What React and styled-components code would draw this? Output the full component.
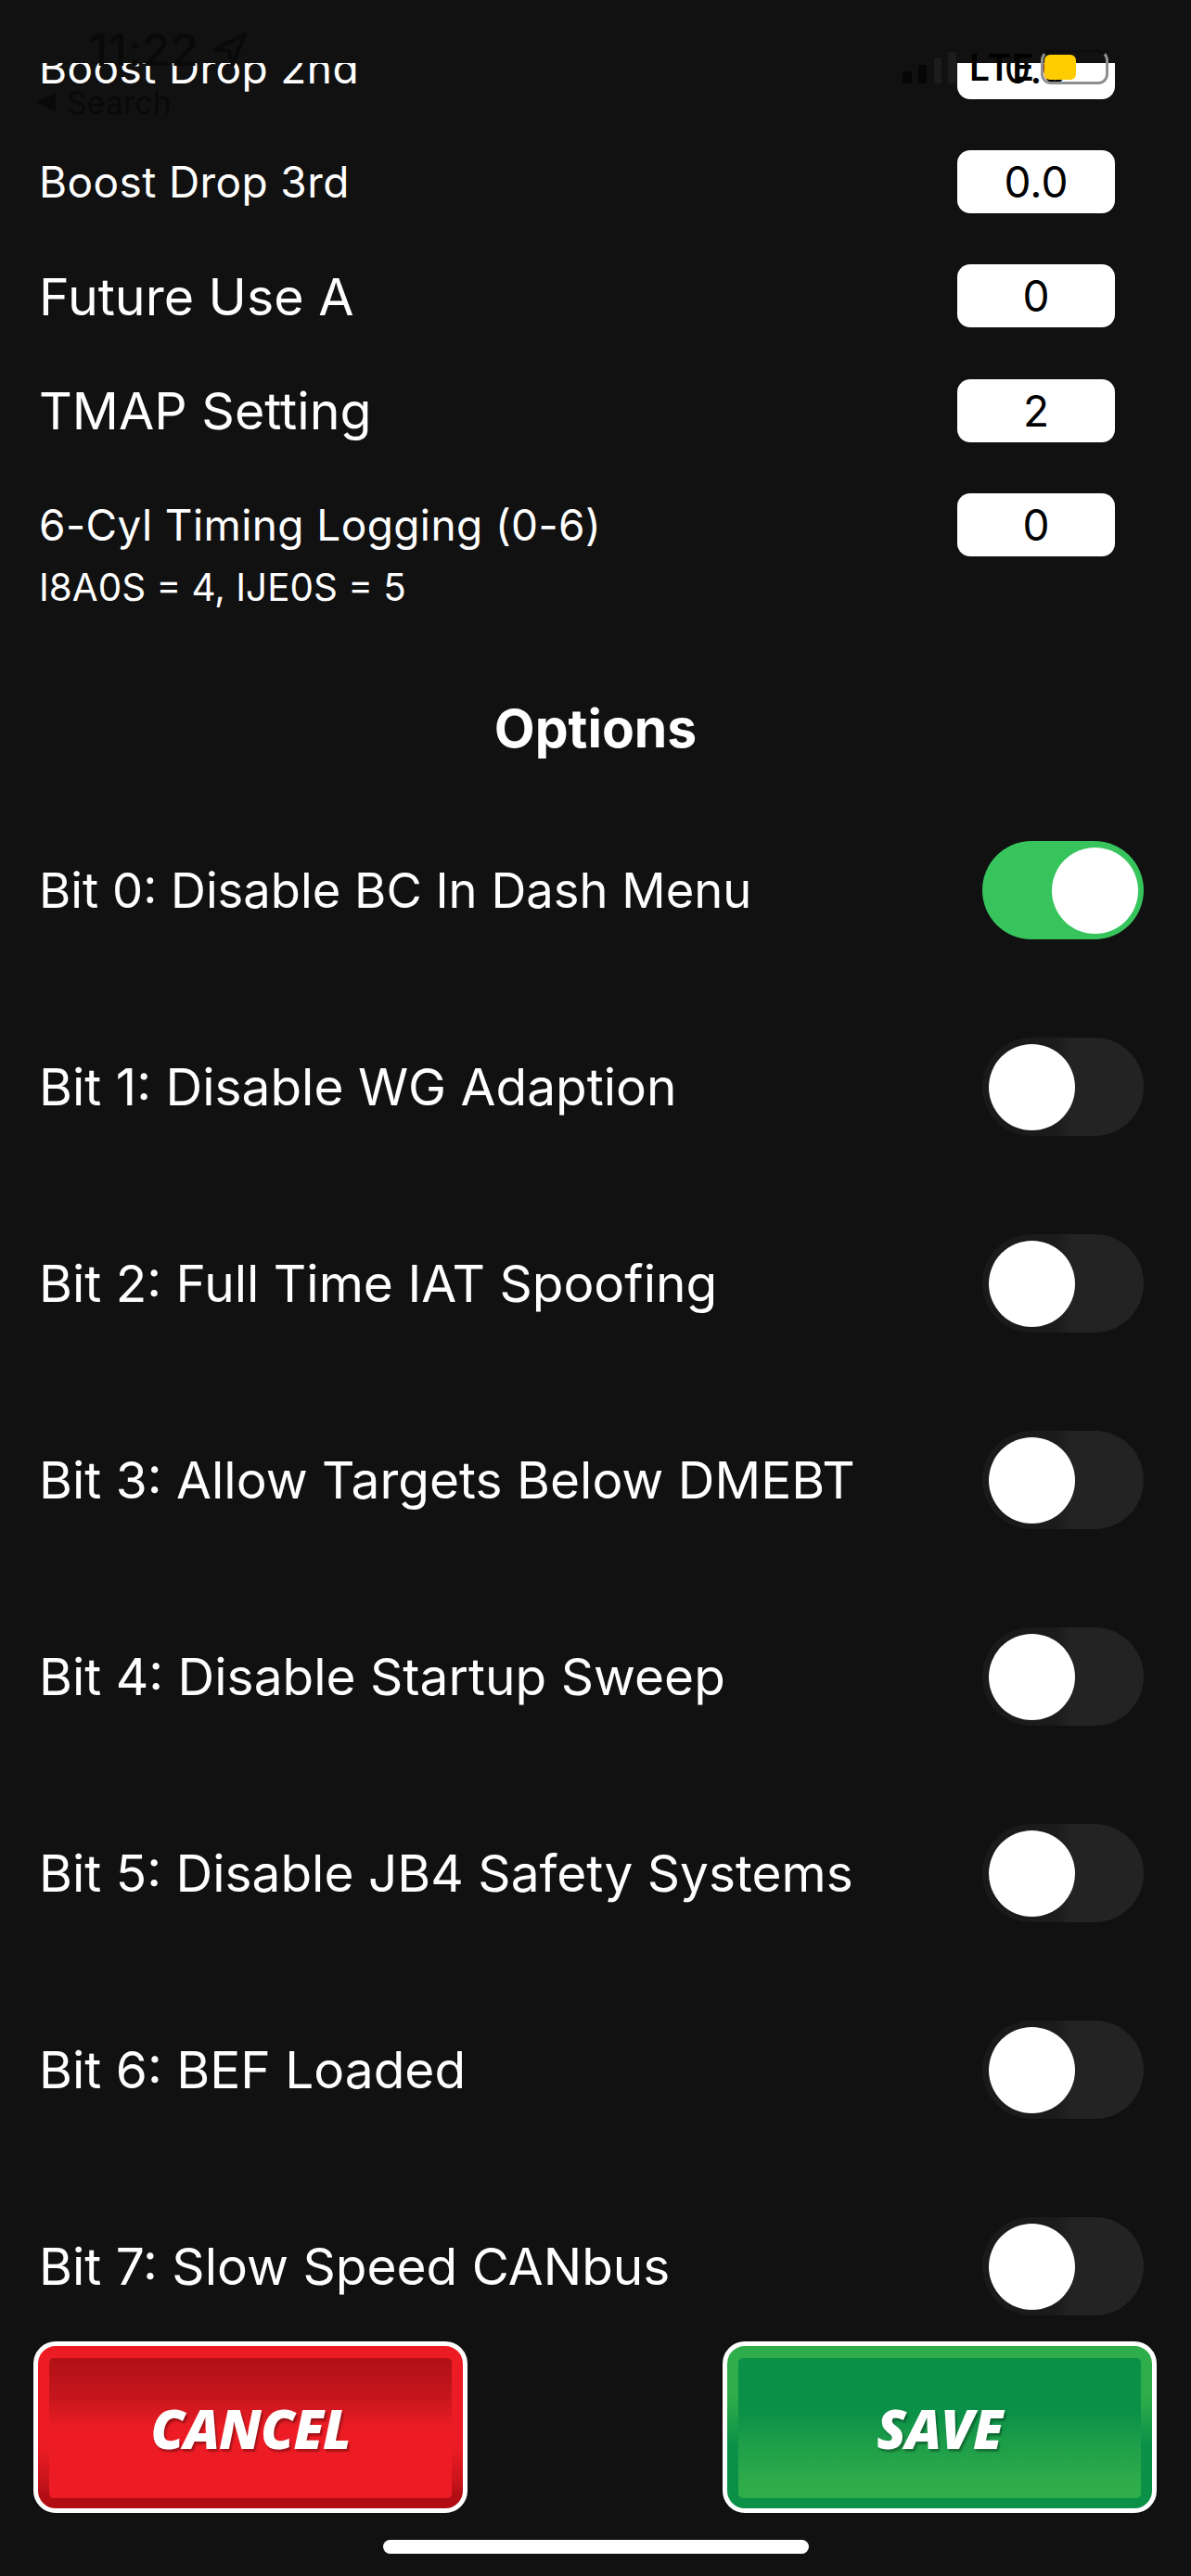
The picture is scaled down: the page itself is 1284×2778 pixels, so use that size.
import React from "react";
import styled, { createGlobalStyle } from "styled-components";

const Global = createGlobalStyle`
  html, body { margin: 0; padding: 0; background: #111111; }
  * { box-sizing: border-box; }
`;

const Page = styled.div`
  position: relative;
  width: 1284px;
  height: 2778px;
  overflow: hidden;
  background: #111111;
  color: #ffffff;
  font-family: Inter, "Liberation Sans", sans-serif;
  display: flex;
  flex-direction: column;
  padding-top: 68px;
`;

const Scroller = styled.main`
  height: 2429px;
  overflow: hidden;
  flex: none;
`;

const Content = styled.div`
  margin-top: -57px;
  display: flex;
  flex-direction: column;
`;

const FieldRow = styled.div`
  height: 123.3px;
  padding: 0 82px 0 42px;
  display: flex;
  align-items: center;
  justify-content: space-between;
`;

const FieldLabel = styled.span`
  font-size: ${(p) => p.$size}px;
  font-weight: 400;
  letter-spacing: ${(p) => p.$track || 0}px;
`;

const ValueBox = styled.div`
  width: 170px;
  height: 68px;
  border-radius: 14px;
  background: #ffffff;
  color: #000000;
  font-size: 46px;
  display: flex;
  align-items: center;
  justify-content: center;
`;

const Note = styled.div`
  margin: -18px 0 0 42px;
  height: 50px;
  font-size: 40.4px;
  line-height: 50px;
`;

const Heading = styled.h2`
  margin: 97px 0 0;
  height: 60px;
  font-size: 57px;
  line-height: 60px;
  font-weight: 700;
  text-align: center;
`;

const OptionList = styled.div`
  margin-top: 91px;
  display: flex;
  flex-direction: column;
  gap: 106px;
`;

const OptionRow = styled.div`
  height: 106px;
  padding: 0 51px 0 42px;
  display: flex;
  align-items: center;
  justify-content: space-between;
`;

const OptionLabel = styled.span`
  font-size: ${(p) => p.$size}px;
  font-weight: 400;
`;

const Track = styled.div`
  position: relative;
  width: 174px;
  height: 106px;
  border-radius: 53px;
  background: ${(p) =>
    p.$on ? "#37c45d" : "linear-gradient(90deg, #1a1a1a 0%, #1b1b1b 45%, #232323 55%, #232323 100%)"};
`;

const Thumb = styled.div`
  position: absolute;
  top: 6.5px;
  left: ${(p) => (p.$on ? "75px" : "7px")};
  width: 93px;
  height: 93px;
  border-radius: 50%;
  background: #ffffff;
`;

const Footer = styled.footer`
  margin-top: 28px;
  padding: 0 37px 0 36px;
  display: flex;
  justify-content: space-between;
  flex: none;
`;

const ActionButton = styled.button`
  width: 468px;
  height: 185px;
  padding: 13px 12px 11px;
  border: 5px solid #ffffff;
  border-radius: 24px;
  display: flex;
  background: ${(p) => p.$frame};
  font: inherit;
`;

const ButtonFace = styled.span`
  flex: 1;
  border-radius: 5px;
  background: ${(p) => p.$face};
  display: flex;
  align-items: center;
  justify-content: center;
  color: #ffffff;
  font-family: "Open Sans", "Liberation Sans", sans-serif;
  font-size: 58px;
  font-weight: 800;
  font-style: italic;
  letter-spacing: -1px;
  text-shadow: 2px 3px 2px rgba(0, 0, 0, 0.3);
`;

const HomeBar = styled.div`
  width: 459px;
  height: 15px;
  margin: 29px auto 0;
  border-radius: 8px;
  background: #ffffff;
  flex: none;
`;

/* Ghost status bar that lies over the content */
const StatusLeft = styled.div`
  position: absolute;
  left: 39px;
  top: 25px;
  color: #090909;
  display: flex;
  flex-direction: column;
  gap: 8px;
`;

const TimeLine = styled.div`
  margin-left: 57px;
  display: flex;
  align-items: center;
  gap: 14px;
  font-size: 48px;
  font-weight: 500;
  letter-spacing: 1px;
  height: 56px;
`;

const BackLine = styled.div`
  display: flex;
  align-items: center;
  gap: 12px;
  font-size: 34px;
  height: 42px;
`;

const StatusRight = styled.div`
  position: absolute;
  left: 973px;
  top: 54px;
  height: 37px;
  display: flex;
  align-items: center;
`;

const Signal = styled.svg`
  width: 60px;
  height: 37px;
  margin-right: 12px;
`;

const Lte = styled.span`
  width: 77px;
  color: #000;
  font-size: 39px;
  font-weight: 600;
  letter-spacing: 1px;
`;

const Battery = styled.div`
  position: relative;
  width: 73px;
  height: 37px;
  border: 3px solid #8f8f8f;
  border-top-color: #0c0c0c;
  border-radius: 11px;
`;

const BatteryDot = styled.div`
  position: absolute;
  left: 1px;
  top: 2px;
  width: 34px;
  height: 27px;
  border-radius: 6px;
  background: #ffcc00;
`;

const fields = [
  { label: "Boost Drop 2nd", value: "0.0", size: 46, track: 0.4 },
  { label: "Boost Drop 3rd", value: "0.0", size: 46, track: 0.4 },
  { label: "Future Use A", value: "0", size: 55.5 },
  { label: "TMAP Setting", value: "2", size: 55.5 },
  { label: "6-Cyl Timing Logging (0-6)", value: "0", size: 46, track: 0.4 },
];

const options = [
  ["Bit 0: Disable BC In Dash Menu", true, 52.5],
  ["Bit 1: Disable WG Adaption", false, 55],
  ["Bit 2: Full Time IAT Spoofing", false, 55],
  ["Bit 3: Allow Targets Below DMEBT", false, 55],
  ["Bit 4: Disable Startup Sweep", false, 55],
  ["Bit 5: Disable JB4 Safety Systems", false, 55],
  ["Bit 6: BEF Loaded", false, 55],
  ["Bit 7: Slow Speed CANbus", false, 55],
];

export default function App() {
  return (
    <Page>
      <Global />
      <Scroller>
        <Content>
          {fields.map((f) => (
            <FieldRow key={f.label}>
              <FieldLabel $size={f.size} $track={f.track}>{f.label}</FieldLabel>
              <ValueBox>{f.value}</ValueBox>
            </FieldRow>
          ))}
          <Note>I8A0S = 4, IJE0S = 5</Note>
          <Heading>Options</Heading>
          <OptionList>
            {options.map(([label, on, size]) => (
              <OptionRow key={label}>
                <OptionLabel $size={size}>{label}</OptionLabel>
                <Track $on={on}><Thumb $on={on} /></Track>
              </OptionRow>
            ))}
          </OptionList>
        </Content>
      </Scroller>
      <Footer>
        <ActionButton $frame="linear-gradient(180deg, #ed1c24 0%, #ed1c24 62%, #c5141b 85%, #b30d14 91%, #b30d14 100%)">
          <ButtonFace $face="linear-gradient(180deg, #b01116 0%, #c5161d 28%, #ed1c24 50%, #ed1c24 100%)">
            CANCEL
          </ButtonFace>
        </ActionButton>
        <ActionButton $frame="linear-gradient(180deg, #30ad4b 0%, #30ad4b 30%, #0a9047 62%, #0a9047 100%)">
          <ButtonFace $face="linear-gradient(180deg, #0a9047 0%, #0a9047 38%, #1b9c49 58%, #30ad4b 90%, #30ad4b 100%)">
            SAVE
          </ButtonFace>
        </ActionButton>
      </Footer>
      <HomeBar />
      <StatusLeft>
        <TimeLine>
          11:22
          <svg width="38" height="38" viewBox="0 0 38 38" fill="none" stroke="#090909" strokeWidth="4" strokeLinejoin="round">
            <path d="M35 3 3 19l15 2 4 15z" />
          </svg>
        </TimeLine>
        <BackLine>
          <svg width="21" height="20" viewBox="0 0 21 20" fill="#090909"><path d="M21 0v20L0 10z" /></svg>
          Search
        </BackLine>
      </StatusLeft>
      <StatusRight>
        <Signal viewBox="0 0 60 37">
          <rect x="0" y="23" width="10" height="13" rx="2" fill="#060606" />
          <rect x="17" y="16" width="9" height="20" rx="2" fill="#060606" />
          <rect x="34" y="8" width="8" height="28" rx="2" fill="#1c1c1c" />
          <rect x="49" y="2" width="9" height="34" rx="2" fill="#1c1c1c" />
        </Signal>
        <Lte>LTE</Lte>
        <Battery><BatteryDot /></Battery>
      </StatusRight>
    </Page>
  );
}
